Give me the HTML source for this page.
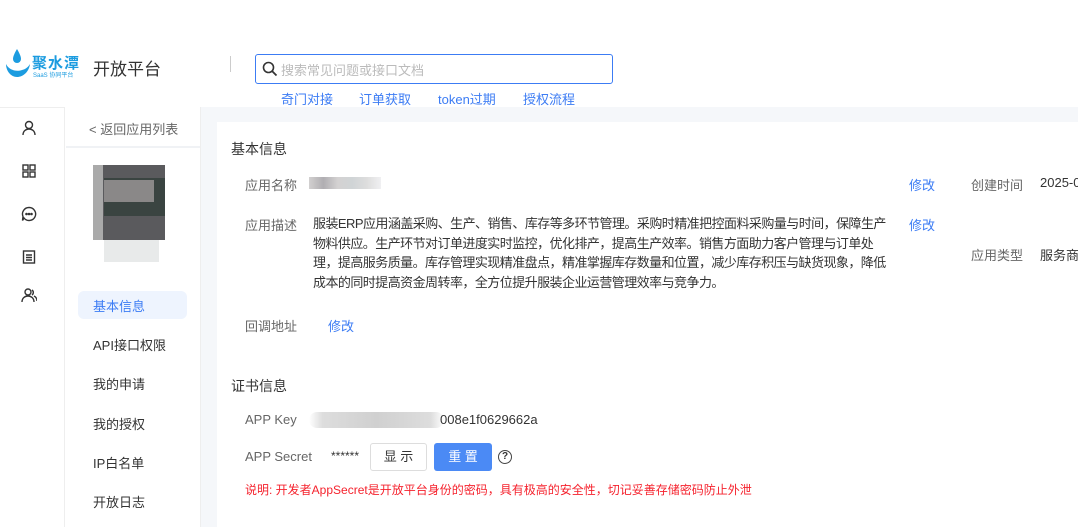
<!DOCTYPE html><html><head><meta charset="utf-8"><style>
*{margin:0;padding:0;box-sizing:border-box}
body{width:1078px;height:527px;overflow:hidden;background:#fff;font-family:"Liberation Sans","Noto Sans CJK SC",sans-serif;position:relative;color:#333}
.a{position:absolute;white-space:nowrap}
.lbl{color:#666;font-size:13px}
.blue{color:#3c7cf4}
</style></head><body>
<svg class="a" style="left:5px;top:48px" width="26" height="32" viewBox="0 0 26 32"><path d="M12 1 C9 6 8 9 8 11 a4 4 0 0 0 8 0 c0-2-1-5-4-10z" fill="#1c9ce0"/><path d="M1 16 c3 6 10 8 16 6 c4-1 6-3 8-6 c-1 8-7 13-13 13 c-6 0-11-6-11-13z" fill="#1c9ce0"/></svg>
<div class="a" style="left:32px;top:52px;font-size:15px;color:#1c9ce0;font-weight:bold;letter-spacing:1px">聚水潭</div>
<div class="a" style="left:33px;top:70px;font-size:6px;color:#1c9ce0">SaaS 协同平台</div>
<div class="a" style="left:93px;top:55px;font-size:17px;color:#333">开放平台</div>
<div class="a" style="left:230px;top:56px;width:1px;height:16px;background:#ccc"></div>
<div class="a" style="left:255px;top:54px;width:358px;height:30px;border:1.5px solid #3c7cf4;border-radius:3px"></div>
<svg class="a" style="left:262px;top:61px" width="16" height="16" viewBox="0 0 16 16"><circle cx="6.5" cy="6.5" r="5" fill="none" stroke="#333" stroke-width="1.6"/><path d="M10 10l4.5 4.5" stroke="#333" stroke-width="1.8"/></svg>
<div class="a" style="left:281px;top:60px;font-size:13px;color:#bbb">搜索常见问题或接口文档</div>
<div class="a blue" style="left:281px;top:89px;font-size:13px">奇门对接</div>
<div class="a blue" style="left:359px;top:89px;font-size:13px">订单获取</div>
<div class="a blue" style="left:438px;top:89px;font-size:13px">token过期</div>
<div class="a blue" style="left:523px;top:89px;font-size:13px">授权流程</div>
<div class="a" style="left:0;top:107px;width:65px;height:420px;border-right:1px solid #eee;border-top:1px solid #eee"></div>
<svg class="a" style="left:21px;top:120px" width="16" height="200" viewBox="0 0 16 200" fill="none" stroke="#333" stroke-width="1.4"><circle cx="8" cy="5" r="3.5"/><path d="M2 15c0-4 3-6 6-6s6 2 6 6"/><rect x="2" y="45" width="5" height="5"/><rect x="9" y="45" width="5" height="5"/><rect x="2" y="52" width="5" height="5"/><rect x="9" y="52" width="5" height="5"/><path d="M8 87.5a6.5 6.5 0 1 1 -5 10.5 l-1.5 2.5 l0.5-4 a6.5 6.5 0 0 1 6-9z"/><circle cx="5.5" cy="94" r=".6" fill="#333"/><circle cx="8" cy="94" r=".6" fill="#333"/><circle cx="10.5" cy="94" r=".6" fill="#333"/><rect x="2.5" y="131" width="11" height="12"/><path d="M5 135h6M5 137.5h6M5 140h6"/><circle cx="7" cy="172" r="3"/><path d="M1 182c0-4 3-6 6-6s6 2 6 6M11 170a3 3 0 0 1 0 5M13 176c2 1 3 3 3 5"/></svg>
<div class="a" style="left:65px;top:107px;width:136px;height:420px;background:#fff;border-right:1px solid #eee"></div>
<div class="a" style="left:66px;top:146px;width:134px;height:2px;background:#f0f2f5"></div>
<div class="a" style="left:89px;top:119px;font-size:13px;color:#666">&lt;&nbsp;返回应用列表</div>
<div class="a" style="left:93px;top:165px;width:72px;height:75px;background:linear-gradient(90deg,#aaa 0 10px,#5a5a5d 10px);"></div>
<div class="a" style="left:104px;top:178px;width:61px;height:38px;background:#2c3a36;opacity:.7"></div>
<div class="a" style="left:104px;top:180px;width:50px;height:22px;background:#8a8888"></div>
<div class="a" style="left:104px;top:240px;width:55px;height:22px;background:#e8eaea"></div>
<div class="a" style="left:78px;top:291px;width:109px;height:28px;background:#eef4fe;border-radius:6px"></div>
<div class="a blue" style="left:93px;top:296px;font-size:13px">基本信息</div>
<div class="a" style="left:93px;top:335px;font-size:13px">API接口权限</div>
<div class="a" style="left:93px;top:374px;font-size:13px">我的申请</div>
<div class="a" style="left:93px;top:414px;font-size:13px">我的授权</div>
<div class="a" style="left:93px;top:453px;font-size:13px">IP白名单</div>
<div class="a" style="left:93px;top:492px;font-size:13px">开放日志</div>
<div class="a" style="left:201px;top:107px;width:877px;height:420px;background:#f5f7fa"></div>
<div class="a" style="left:217px;top:122px;width:861px;height:405px;background:#fff"></div>
<div class="a" style="left:231px;top:139px;font-size:14px;color:#333">基本信息</div>
<div class="a lbl" style="left:245px;top:175px">应用名称</div>
<div class="a" style="left:309px;top:177px;width:72px;height:12px;background:linear-gradient(90deg,#d2d0d0,#b0aeb2,#d4d2d2,#d0d4d6,#ddd,#f0f0f2)"></div>
<div class="a blue" style="left:909px;top:175px;font-size:13px">修改</div>
<div class="a lbl" style="left:971px;top:175px">创建时间</div>
<div class="a" style="left:1040px;top:175px;font-size:13px">2025-0</div>
<div class="a lbl" style="left:245px;top:215px">应用描述</div>
<div class="a" style="left:313px;top:214px;width:590px;font-size:13px;letter-spacing:-0.55px;line-height:19.5px;white-space:normal;color:#333">服装ERP应用涵盖采购、生产、销售、库存等多环节管理。采购时精准把控面料采购量与时间，保障生产<br>物料供应。生产环节对订单进度实时监控，优化排产，提高生产效率。销售方面助力客户管理与订单处<br>理，提高服务质量。库存管理实现精准盘点，精准掌握库存数量和位置，减少库存积压与缺货现象，降低<br>成本的同时提高资金周转率，全方位提升服装企业运营管理效率与竞争力。</div>
<div class="a blue" style="left:909px;top:215px;font-size:13px">修改</div>
<div class="a lbl" style="left:971px;top:245px">应用类型</div>
<div class="a" style="left:1040px;top:245px;font-size:13px">服务商</div>
<div class="a lbl" style="left:245px;top:316px">回调地址</div>
<div class="a blue" style="left:328px;top:316px;font-size:13px">修改</div>
<div class="a" style="left:231px;top:376px;font-size:14px">证书信息</div>
<div class="a lbl" style="left:245px;top:412px">APP Key</div>
<div class="a" style="left:309px;top:412px;width:135px;height:16px;background:linear-gradient(90deg,#fff,#ddd 10%,#d0d0d0 50%,#ddd 90%,#fff);border-radius:8px"></div>
<div class="a" style="left:440px;top:412px;font-size:13px">008e1f0629662a</div>
<div class="a lbl" style="left:245px;top:449px">APP Secret</div>
<div class="a" style="left:331px;top:449px;font-size:12px">******</div>
<div class="a" style="left:370px;top:443px;width:57px;height:28px;border:1px solid #ddd;border-radius:3px;font-size:13px;text-align:center;line-height:26px">显 示</div>
<div class="a" style="left:434px;top:443px;width:58px;height:28px;background:#4b8af5;border-radius:3px;color:#fff;font-size:13px;text-align:center;line-height:28px">重 置</div>
<div class="a" style="left:498px;top:450px;width:14px;height:14px;border:1.3px solid #444;border-radius:50%;font-size:10px;text-align:center;line-height:12px;font-weight:bold">?</div>
<div class="a" style="left:245px;top:481px;font-size:12px;color:#f5222d">说明: 开发者AppSecret是开放平台身份的密码，具有极高的安全性，切记妥善存储密码防止外泄</div>
</body></html>
